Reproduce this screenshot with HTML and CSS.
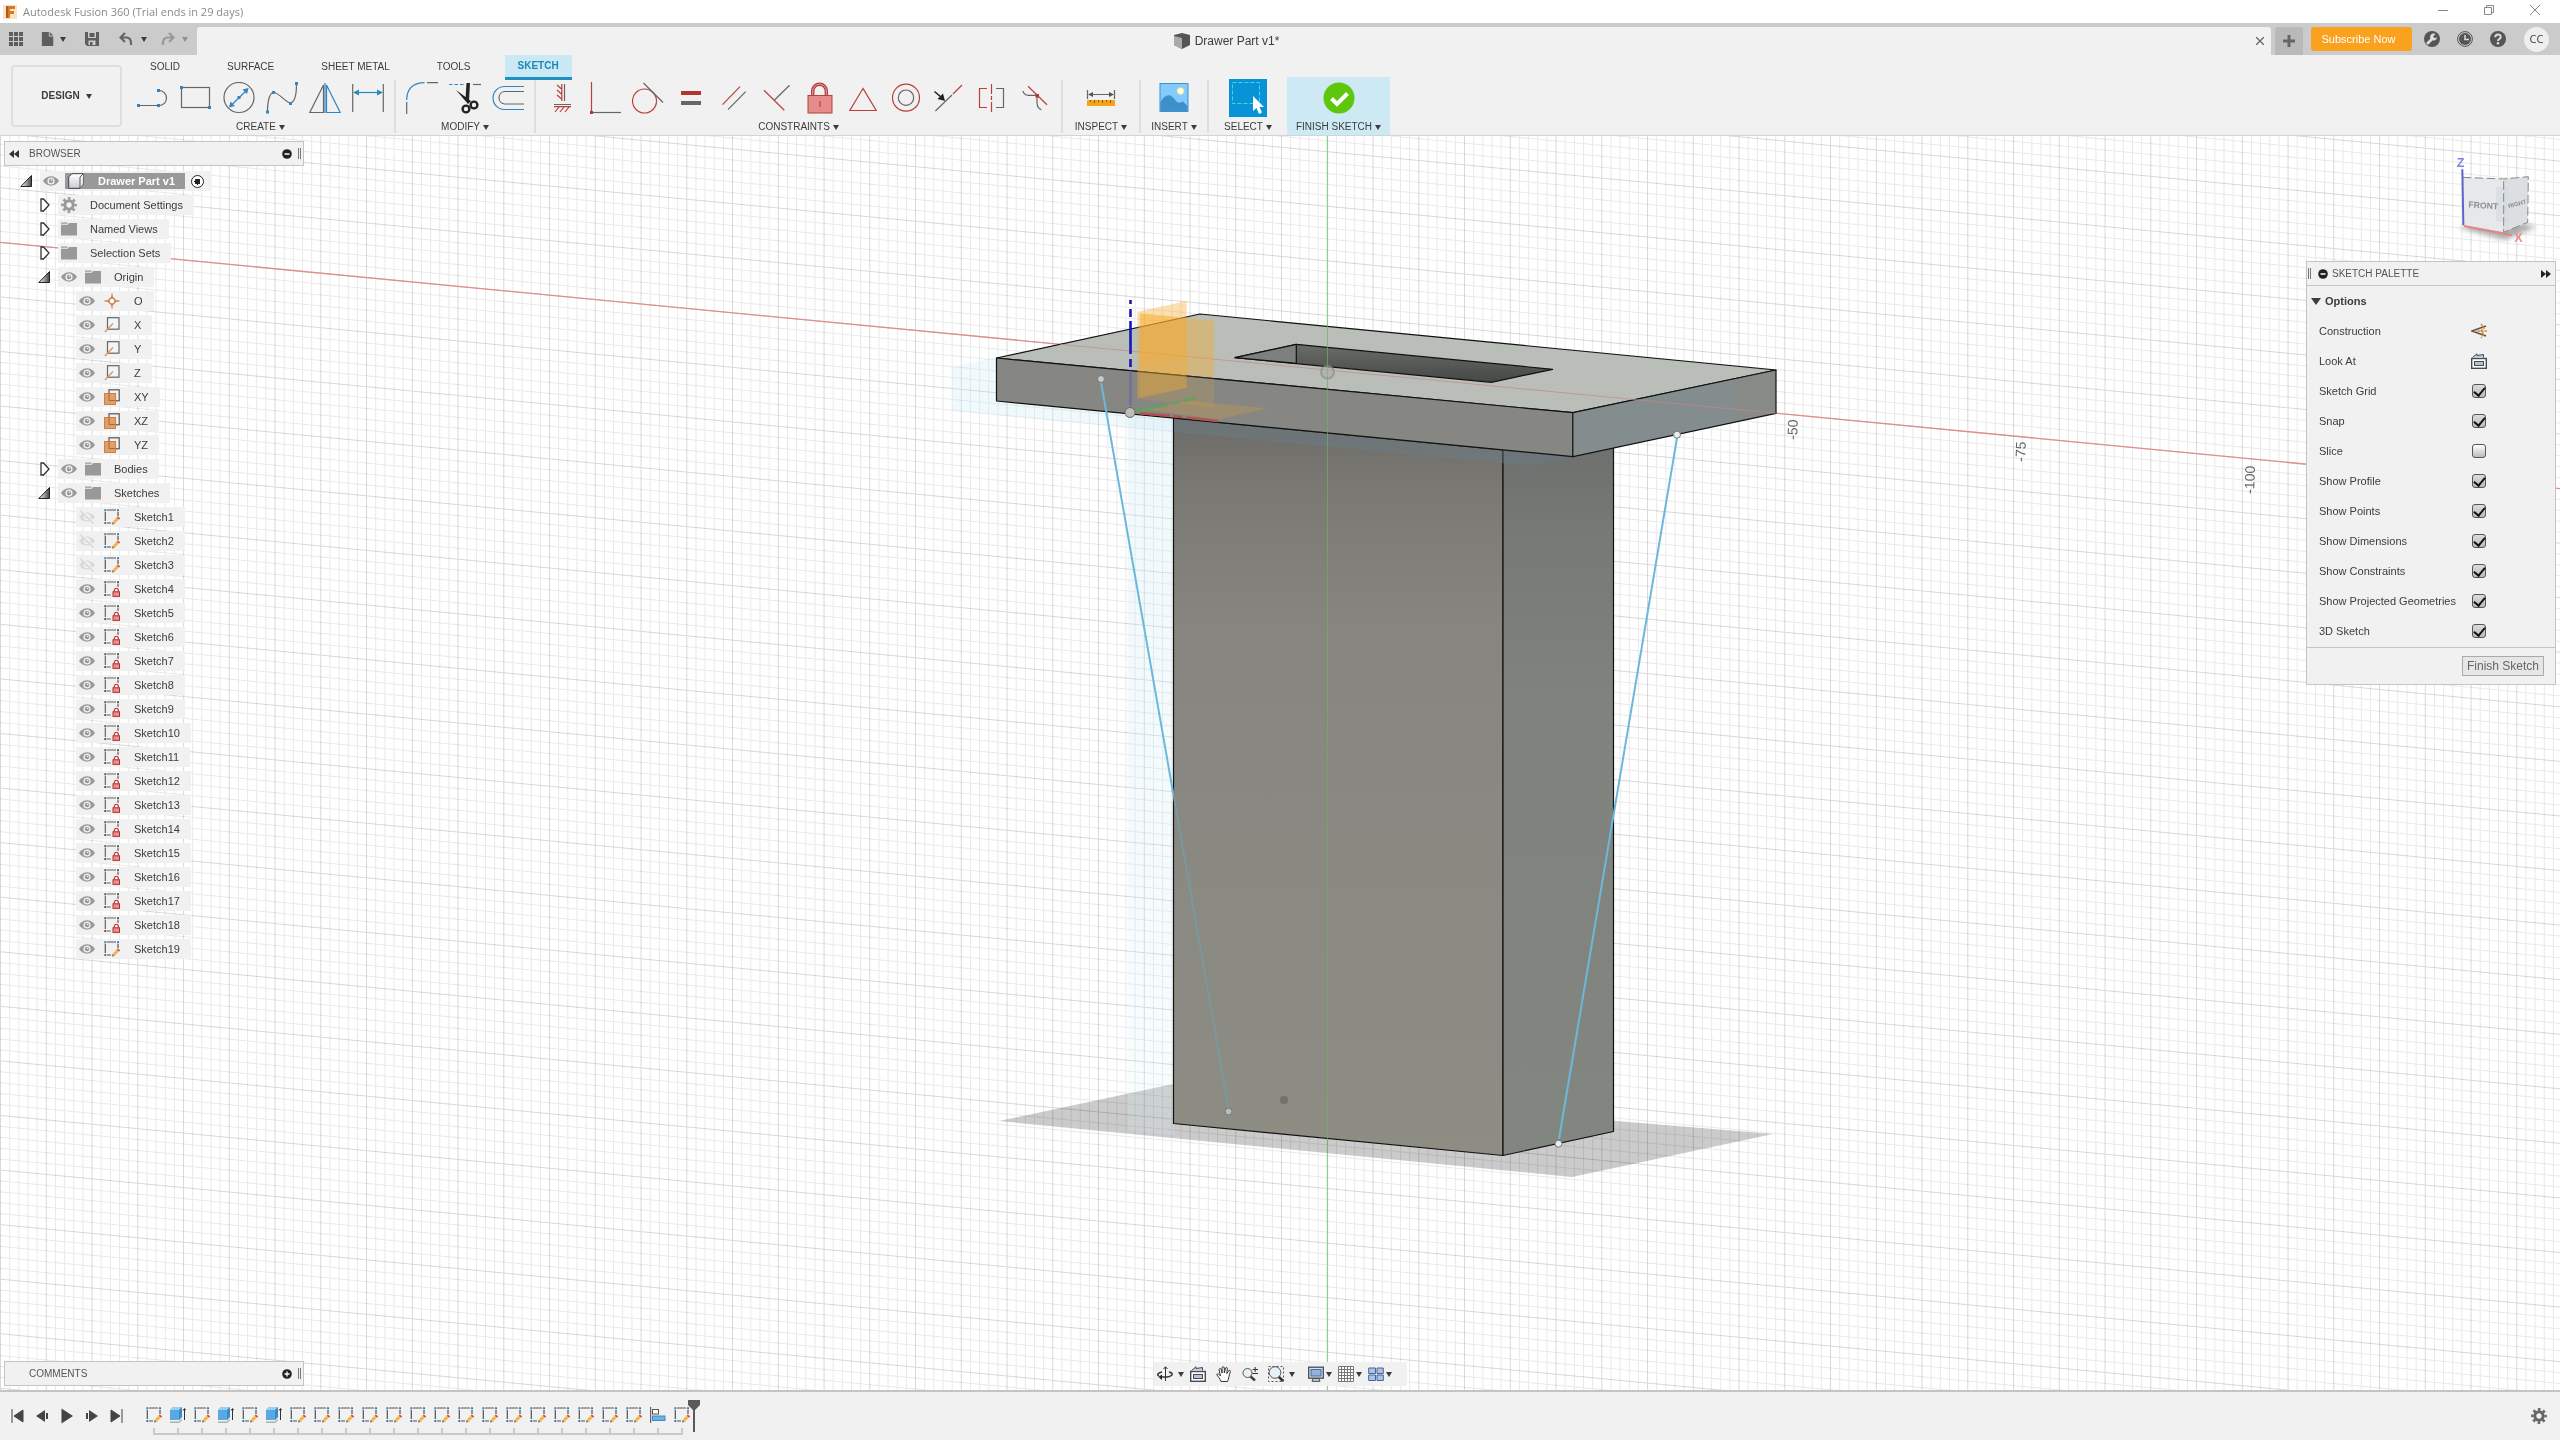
FILE: index.html
```html
<!DOCTYPE html>
<html lang="en">
<head>
<meta charset="utf-8">
<title>Autodesk Fusion 360</title>
<link rel="stylesheet" href="styles.css">
</head>
<body>
<svg class="sprite" aria-hidden="true">
  <defs>
    <linearGradient id="tri-fill" x1="0" x2="1"><stop offset="0" stop-color="#fff"/><stop offset="1" stop-color="#444"/></linearGradient>
    <linearGradient id="cube-fill" x1="0" x2="0" y1="0" y2="1"><stop offset="0" stop-color="#fff"/><stop offset="1" stop-color="#c9ccd2"/></linearGradient>
  </defs>
  <symbol id="eye" viewBox="0 0 16 16"><path d="M0 8C4 1.800 12 1.800 16 8C12 14.200 4 14.200 0 8Z" fill="#999"/><circle cx="8" cy="8" r="3.600" fill="#f1f1f1"/><circle cx="8" cy="8" r="2.200" fill="#999"/><circle cx="8.500" cy="7.300" r=".8" fill="#f1f1f1"/></symbol>
  <symbol id="eye-off" viewBox="0 0 16 16"><path d="M0 8C4 2 12 2 16 8C12 14 4 14 0 8Z" fill="#dadada"/><circle cx="8" cy="8" r="3.300" fill="#f1f1f1"/><circle cx="8" cy="8" r="1.800" fill="#dadada"/><path d="M2 1.500L15 14" stroke="#f1f1f1" stroke-width="3"/><path d="M1.500 2L14.500 14.500" stroke="#d4d4d4" stroke-width="1.300"/></symbol>
  <symbol id="folder" viewBox="0 0 16 16"><path d="M0 1.500h6.500v1.300H0zM0 3.700h7l1-1.700h8v12.500H0z" fill="#999"/></symbol>
  <symbol id="gear" viewBox="0 0 16 16"><circle cx="8" cy="8" r="4.200" fill="none" stroke="currentColor" stroke-width="3"/><circle cx="8" cy="8" r="6.600" fill="none" stroke="currentColor" stroke-width="2.600" stroke-dasharray="2.600 2.584" stroke-dashoffset="1.300"/></symbol>
  <symbol id="open" viewBox="0 0 12 12"><path d="M11.500 .5V11.500H.8Z" fill="url(#tri-fill)" stroke="#222"/></symbol>
  <symbol id="closed" viewBox="0 0 10 14"><path d="M1 1V13H3.500L9 7L3.500 1Z" fill="#fff" stroke="#333" stroke-width="1.300"/></symbol>
  <symbol id="cube" viewBox="0 0 16 16"><path d="M.7 4L4 .7H15.300V11L12 15.300H.7Z" fill="url(#cube-fill)" stroke="#444"/><path d="M.7 4H12V15.300L15.300 11V.7Z" fill="#fff" fill-opacity=".5"/><path d="M12 4L15.300 .7M12 4V15.300" fill="none" stroke="#555"/></symbol>
  <symbol id="point" viewBox="0 0 16 16"><path d="M8 .5V15.500M.5 8H15.500" stroke="#d18a56" stroke-width="1.300"/><path d="M8 2.800L13.200 8L8 13.200L2.800 8Z" fill="#d18a56"/><circle cx="8" cy="8" r="2.200" fill="#fff"/></symbol>
  <symbol id="axis" viewBox="0 0 16 16"><rect x="3.500" y=".7" width="11.500" height="11.500" fill="#f4f4f4" stroke="#666" stroke-width="1.200"/><path d="M.8 15L9 6.500" stroke="#dc9258" stroke-width="1.200"/></symbol>
  <symbol id="plane" viewBox="0 0 16 16"><rect x="5" y=".8" width="10.200" height="11" fill="none" stroke="#555" stroke-width="1.200"/><rect x=".5" y="4.500" width="11" height="11" fill="#e0a06c" stroke="#d08040"/><path d="M5 4.500V11.500H11.500" fill="none" stroke="#b8672b"/></symbol>
  <symbol id="sk" viewBox="0 0 16 16"><path d="M3 1H12M1.300 3V12M14 3V7M3 14H7" stroke="#555" stroke-width="1.200" fill="none"/><path d="M.3 .3h2v2h-2zM13 .3h2v2h-2zM.3 13h2v2h-2z" fill="#2c7fbb"/><path d="M9 14.500L14.300 9" stroke="#efb75a" stroke-width="3.200"/><path d="M13.300 8L15.500 10" stroke="#d5463e" stroke-width="1.600"/><path d="M8 15.600L8.600 13.200L10.300 15Z" fill="#666"/></symbol>
  <symbol id="skl" viewBox="0 0 16 16"><path d="M3 1H12M1.300 3V12M14 3V6M3 14H7" stroke="#666" stroke-width="1.200" fill="none"/><path d="M.3 .3h2v2h-2zM13 .3h2v2h-2zM.3 13h2v2h-2z" fill="#555"/><path d="M10.300 11V9.300a2 2 0 0 1 4 0V11" fill="none" stroke="#c43c3c" stroke-width="1.200"/><rect x="9" y="10.800" width="6.500" height="4.600" fill="#ea8d8d" stroke="#b52f2f"/></symbol>
  <symbol id="ext" viewBox="0 0 16 16"><path d="M0 14.500H8.500L12 12V13.500L9 16H0Z" fill="#a9b3b9"/><path d="M0 3L3 0H12V10L9 13H0Z" fill="#5aa9e2"/><path d="M0 3L3 0H12L9 3Z" fill="#9bd0f4"/><path d="M9 3L12 0V10L9 13Z" fill="#3c8ac6"/><path d="M14.500 2V13M13 3.500L14.500 1.500L16 3.500" stroke="#333" fill="none"/></symbol>
  <symbol id="align" viewBox="0 0 16 16"><path d="M.7 0V16" stroke="#444"/><rect x="2.500" y="2.500" width="6" height="4.500" fill="#fff" stroke="#555"/><rect x="2.500" y="9" width="12.500" height="4.500" fill="#6fb1e2" stroke="#3f8ac2"/></symbol>
  <symbol id="look" viewBox="0 0 16 16"><rect x=".7" y="5.500" width="14.600" height="9.800" fill="#fff" stroke="#444b57" stroke-width="1.400"/><rect x="3.500" y="8.500" width="9" height="4" fill="#b9c1cf" stroke="#444b57"/><path d="M1.500 4.500L6 .8V2.500L12.500 1.500V4.500" fill="#c3c9d3" stroke="#444b57"/></symbol>
</svg>

<header class="titlebar">
  <svg class="i14" viewBox="0 0 14 14"><rect width="14" height="14" fill="#fbe3c8"/><path d="M3 13V1H12V4H7V6H11V9H7V13Z" fill="#d77b22"/><path d="M3 13V1H5V13Z" fill="#b5581c"/></svg>
  <h1 class="apptitle">Autodesk Fusion 360 (Trial ends in 29 days)</h1>
  <div class="winbtns">
    <button aria-label="Minimize"><svg class="i10" viewBox="0 0 10 10"><path d="M0 5.500H10" stroke="#888"/></svg></button>
    <button aria-label="Restore"><svg class="i10" viewBox="0 0 10 10"><path d="M.5 2.500h7v7h-7zM2.500 2.500v-2h7v7h-2" fill="none" stroke="#888"/></svg></button>
    <button aria-label="Close"><svg class="i10" viewBox="0 0 10 10"><path d="M0 0L10 10M10 0L0 10" stroke="#888"/></svg></button>
  </div>
</header>

<div class="appbar">
  <div class="quick">
    <button aria-label="Data panel"><svg class="i14" viewBox="0 0 14 14"><path d="M0 0h4v4H0zM5 0h4v4H5zM10 0h4v4h-4zM0 5h4v4H0zM5 5h4v4H5zM10 5h4v4h-4zM0 10h4v4H0zM5 10h4v4H5zM10 10h4v4h-4z" fill="#5e5e5e"/></svg></button>
    <button class="pair file" aria-label="File"><svg class="i14" viewBox="0 0 14 16"><path d="M0 0H8V5H13V16H0Z" fill="#5e5e5e"/><path d="M9 0L13 4H9Z" fill="#5e5e5e"/></svg><span class="caret"></span></button>
    <button class="save" aria-label="Save"><svg class="i14" viewBox="0 0 14 14"><path d="M0 0H14V14H2L0 12Z" fill="#5e5e5e"/><path d="M3 0H11V6H3ZM3.500 8.500H10.500V13H3.500Z" fill="#ccc"/><path d="M4.500 1H9.500V5H4.500ZM5 10H7.500V13H5Z" fill="#5e5e5e"/></svg></button>
    <button class="pair undo" aria-label="Undo"><svg class="i14" viewBox="0 0 14 14"><path d="M6 1L1.500 5.500L6 10M2 5.500H8Q12.500 6 12 13" fill="none" stroke="#666" stroke-width="2.200"/></svg><span class="caret"></span></button>
    <button class="pair redo" aria-label="Redo"><svg class="i14" viewBox="0 0 14 14"><path d="M8 1L12.500 5.500L8 10M12 5.500H6Q1.500 6 2 13" fill="none" stroke="#999" stroke-width="2.200"/></svg><span class="caret pale"></span></button>
  </div>
  <div class="doctab">
    <span></span>
    <span class="docname"><svg class="i16" viewBox="0 0 16 16"><path d="M0 2L8 0L16 2V12L8 16L0 12Z" fill="#555"/><path d="M0 3L8 5V16L0 12Z" fill="#aaa"/></svg>Drawer Part v1*</span>
    <button class="closetab" aria-label="Close tab"><svg class="i8" viewBox="0 0 8 8"><path d="M0 0L8 8M8 0L0 8" stroke="#666" stroke-width="1.300"/></svg></button>
  </div>
  <button class="newtab" aria-label="New tab"><svg class="i14" viewBox="0 0 14 14"><path d="M7 1V13M1 7H13" stroke="#666" stroke-width="3"/></svg></button>
  <button class="subscribe">Subscribe Now</button>
  <div class="account">
    <button aria-label="Extensions"><svg class="i16" viewBox="0 0 16 16"><circle cx="8" cy="8" r="8" fill="#555"/><path d="M3 13L8.500 7.500" stroke="#ddd" stroke-width="2.600"/><path d="M11.500 3A3.500 3.500 0 1 0 13 6.500L10.500 7L9 5.500Z" fill="#ddd"/></svg></button>
    <button aria-label="Job status"><svg class="i16" viewBox="0 0 16 16"><circle cx="8" cy="8" r="7.400" fill="none" stroke="#555"/><circle cx="8" cy="8" r="6" fill="#555"/><path d="M8 4V8.500H12" stroke="#ddd" stroke-width="1.500" fill="none"/></svg></button>
    <button aria-label="Help"><svg class="i16" viewBox="0 0 16 16"><circle cx="8" cy="8" r="8" fill="#555"/><path d="M5.300 6.300C5.300 2.500 10.700 2.500 10.700 6C10.700 8 8 8 8 10" fill="none" stroke="#ddd" stroke-width="2"/><circle cx="8" cy="12.300" r="1.300" fill="#ddd"/></svg></button>
    <button class="avatar">CC</button>
  </div>
</div>

<div class="ribbon">
  <button class="design">DESIGN<span class="caret"></span></button>
  <div class="ribbonmain">
    <nav class="tabs">
      <button>SOLID</button><button>SURFACE</button><button>SHEET METAL</button><button>TOOLS</button><button class="active">SKETCH</button>
    </nav>
    <div class="panels">
      <section class="panel">
        <div class="tools">
          <button aria-label="Line"><svg class="i32" viewBox="0 0 32 32"><path d="M2 23.500H21M22 8.500a7.500 7.500 0 0 1 0 15" class="g"/><path d="M0 22h3v3H0zM20 22h3v3h-3zM20 7h3v3h-3z" class="bf"/></svg></button>
          <button aria-label="Rectangle"><svg class="i32" viewBox="0 0 32 32"><rect x="1.500" y="5.500" width="28" height="20" class="g"/><path d="M0 4h3v3H0zM28 24h3v3h-3z" class="bf"/></svg></button>
          <button aria-label="Circle"><svg class="i32" viewBox="0 0 32 32"><circle cx="16" cy="15.500" r="15" class="g"/><path d="M8 23.500L24 8" class="b"/><path d="M14.500 14h3v3h-3zM6 25.500l1.500-6 4.500 4.500zM25.500 6l-1.500 6-4.500-4.500z" class="bf"/></svg></button>
          <button aria-label="Spline"><svg class="i32" viewBox="0 0 32 32"><path d="M1.500 30C1.500 18 4 10.500 7.500 10.500C13 10.500 20 21 24.500 21C29 20 30.500 12 30.500 2" class="g"/><path d="M0 28.500h3v3H0zM6 9h3v3H6zM23 20h3v3h-3zM29 0h3v3h-3z" class="bf"/></svg></button>
          <button aria-label="Mirror"><svg class="i32" viewBox="0 0 32 32"><path d="M14.500 3V30.500H.8Z" class="g"/><path d="M17.500 3V30.500H31.200Z" class="b"/><path d="M16 1V31" class="b"/></svg></button>
          <button aria-label="Dimension"><svg class="i32" viewBox="0 0 32 32"><path d="M.7 2V30M31.300 2V30" class="g"/><path d="M3 10.500H29" class="b"/><path d="M1 10.500l6-3v6zM31 10.500l-6-3v6z" class="bf"/></svg></button>
        </div>
        <button class="plabel">CREATE<span class="caret"></span></button>
      </section>
      <section class="panel">
        <div class="tools">
          <button aria-label="Fillet"><svg class="i32" viewBox="0 0 32 32"><path d="M.7 20V32M21 .7H32" class="g"/><path d="M.7 18Q1 1 18.500 .7" class="b"/></svg></button>
          <button aria-label="Trim"><svg class="i32" viewBox="0 0 32 32"><path d="M0 2.500H16" class="b" stroke-dasharray="3.500 2"/><path d="M24 2.500H32" class="g"/><path d="M17.500 1H21L20 19L16.500 17ZM7 8L22 19L19 22Z" fill="#222"/><circle cx="17" cy="27" r="3.400" fill="none" stroke="#222" stroke-width="2.400"/><circle cx="25" cy="23" r="3.400" fill="none" stroke="#222" stroke-width="2.400"/></svg></button>
          <button aria-label="Offset"><svg class="i32" viewBox="0 0 32 32"><path d="M32 4.500H12.500a11.500 11.500 0 0 0 0 23H32" class="b"/><path d="M32 9.500H12.500a6.300 6.300 0 0 0 0 12.500H32" class="g"/></svg></button>
        </div>
        <button class="plabel">MODIFY<span class="caret"></span></button>
      </section>
      <section class="panel">
        <div class="tools">
          <button aria-label="Horizontal/Vertical"><svg class="i32" viewBox="0 0 32 32"><path d="M18.500 2V19M8 22.500H25" class="g"/><path d="M15.800 2V19M8 24.700H25M11 3l4.500 4M11 8l4.500 4M11 13l4.500 4M9 30l4-5M14 30l4-5M19 30l4-5" class="r"/></svg></button>
          <button aria-label="Coincident"><svg class="i32" viewBox="0 0 32 32"><path d="M4 30.500H32" class="g"/><path d="M2.500 0V29" class="r"/><path d="M1 29h3v3H1z" class="rf"/></svg></button>
          <button aria-label="Tangent"><svg class="i32" viewBox="0 0 32 32"><circle cx="12.500" cy="19" r="12" class="r"/><path d="M11.500 1L31 20.500" class="g"/></svg></button>
          <button aria-label="Equal"><svg class="i32" viewBox="0 0 32 32"><path d="M6 9H26V13H6Z" class="rf"/><path d="M6 19H26V23H6Z" fill="#666"/></svg></button>
          <button aria-label="Parallel"><svg class="i32" viewBox="0 0 32 32"><path d="M4.500 22.700L22 4.700" class="r"/><path d="M10 27.700L27.700 9.700" class="g"/></svg></button>
          <button aria-label="Perpendicular"><svg class="i32" viewBox="0 0 32 32"><path d="M3 8.300L23.300 28.300" class="r"/><path d="M13.500 18L28.600 3.300" class="g"/></svg></button>
          <button aria-label="Fix"><svg class="i32" viewBox="0 0 32 32"><path d="M8.700 14V9a6.500 6.500 0 0 1 13.600 0V14" fill="none" stroke="#b5403c" stroke-width="3.400"/><path d="M8.700 14V9a6.500 6.500 0 0 1 13.600 0V14" fill="none" stroke="#ec9a98"/><rect x="4" y="13.500" width="24" height="17.500" fill="#e58b8a" stroke="#b5403c"/><path d="M16 19V25" class="r"/></svg></button>
          <button aria-label="Midpoint"><svg class="i32" viewBox="0 0 32 32"><path d="M16 6.500L2.800 28.500H29.200Z" class="r"/></svg></button>
          <button aria-label="Concentric"><svg class="i32" viewBox="0 0 32 32"><circle cx="16" cy="15.700" r="13.500" class="r"/><circle cx="16" cy="15.700" r="7.700" class="g"/></svg></button>
          <button aria-label="Collinear"><svg class="i32" viewBox="0 0 32 32"><path d="M2.400 29L19 13" class="g"/><path d="M20 12L29 3" class="r"/><path d="M1.500 9.500L8 15" stroke="#222" stroke-width="1.600"/><path d="M12 19L4.500 17L10 11.500Z" fill="#222"/></svg></button>
          <button aria-label="Symmetry"><svg class="i32" viewBox="0 0 32 32"><path d="M11 6.500H3.500V25.500H11M15.500 2V12M15.500 14V18M15.500 20V30" class="r"/><path d="M20 6.500H27.500V25.500H20" class="g"/></svg></button>
          <button aria-label="Curvature"><svg class="i32" viewBox="0 0 32 32"><path d="M4 9C5 15 12 13 18 13.500C18 20 17 26 22.400 27.700" class="g"/><path d="M9 4.300L28 22.700" class="r"/><path d="M16.500 12h3.500v3.500h-3.500z" class="rf"/></svg></button>
        </div>
        <button class="plabel">CONSTRAINTS<span class="caret"></span></button>
      </section>
      <section class="panel mid">
        <div class="tools"><button aria-label="Measure"><svg class="i32" viewBox="0 0 32 32"><path d="M2.500 8V17M29.500 8V17M4 12.500H28" class="g"/><path d="M3 12.500l5-2.500v5zM29 12.500l-5-2.500v5z" fill="#555"/><path d="M2 18H30V24H2Z" fill="#f5a31a"/><path d="M5.500 18V20M9.500 18V21M13.500 18V20M17.500 18V21M21.500 18V20M25.500 18V21" stroke="#8a5a10"/></svg></button></div>
        <button class="plabel">INSPECT<span class="caret"></span></button>
      </section>
      <section class="panel narrow">
        <div class="tools"><button aria-label="Insert image"><svg class="i32" viewBox="0 0 32 32"><rect x="2" y="1.500" width="28" height="28" fill="#84caff" stroke="#4193c8"/><path d="M2.500 20Q10 7 18 19Q20 22 25 19.500L29.500 24V29H2.500Z" fill="#3d90c9"/><circle cx="22.500" cy="9" r="3.600" fill="#fffce8" stroke="#c9e58b"/></svg></button></div>
        <button class="plabel">INSERT<span class="caret"></span></button>
      </section>
      <section class="panel last">
        <div class="tools"><button class="select" aria-label="Select"><svg class="i38" viewBox="0 0 38 38"><rect width="38" height="38" fill="#0893d6"/><rect x="3.500" y="3.500" width="27" height="21" fill="none" stroke="#4bd3e4" stroke-dasharray="4 2"/><path d="M24 17V32L27.500 29L30 35L33 33.500L30.500 28H35Z" fill="#fff"/></svg></button></div>
        <button class="plabel">SELECT<span class="caret"></span></button>
      </section>
      <section class="panel finish">
        <div class="tools"><button aria-label="Finish"><svg class="i32" viewBox="0 0 32 32"><circle cx="16" cy="16" r="15.500" fill="#5fc70b"/><path d="M8.500 16.500L14 22L24.500 11.500" fill="none" stroke="#fff" stroke-width="4"/></svg></button></div>
        <button class="plabel">FINISH SKETCH<span class="caret"></span></button>
      </section>
    </div>
  </div>
</div>

<main class="viewport">
  <svg class="scene" viewBox="0 136 2560 1254" preserveAspectRatio="xMidYMid slice">
    <defs>
      <linearGradient id="front" x1="0" x2="0" y1="0" y2="1"><stop offset="0" stop-color="#6c6b67"/><stop offset=".1" stop-color="#7b7974"/><stop offset=".28" stop-color="#868580"/><stop offset="1" stop-color="#8e8d84"/></linearGradient>
      <linearGradient id="side" x1="0" x2="0" y1="0" y2="1"><stop offset="0" stop-color="#6d706e"/><stop offset=".12" stop-color="#777975"/><stop offset=".35" stop-color="#80827d"/><stop offset="1" stop-color="#828680"/></linearGradient>
      <linearGradient id="slot" x1="0" x2="0" y1="0" y2="1"><stop offset="0" stop-color="#6b6d69"/><stop offset="1" stop-color="#454744"/></linearGradient>
      <linearGradient id="strip" x1="0" x2="0" y1="0" y2="1"><stop offset="0" stop-color="#c9e9f5" stop-opacity=".3"/><stop offset="1" stop-color="#d5f0f8" stop-opacity=".16"/></linearGradient>
    </defs>
    <path d="M999 1121L1173 1084L1773 1134L1572 1177Z" fill="#cbcbcb"/>
    <path id="grid-minor" class="minor"/>
    <path id="grid-major" class="major"/>
    <path d="M0 242.300L2560 488.600" stroke="#dc8f8c" stroke-width="1.300"/>
    <path d="M1327.500 136V1390" stroke="#8ad28c" stroke-width="1.200"/>
    <path d="M952 367L997 357V414L952 411ZM997 401L1174 419V432L997 415Z" fill="#c5e7f4" fill-opacity=".25"/>
    <path d="M1128 415L1174 419V1135L1128 1130Z" fill="url(#strip)"/>
    <g stroke="#111" stroke-width="1.200" stroke-linejoin="round">
      <path d="M1173.500 418V1123.500L1503 1155.500V450Z" fill="url(#front)"/>
      <path d="M1503 449V1155.500L1613.500 1131.500V447Z" fill="url(#side)"/>
      <path d="M1174 418.500V432L1531 466L1573 457Z" fill="#6a7f8c" fill-opacity=".4" stroke="none"/>
      <path d="M996.500 358L1200 314L1776 370L1573 412.700Z" fill="#b9bfb8"/>
      <path d="M996.500 358V401L1573 456.700V412.700Z" fill="#868682"/>
      <path d="M1573 412.700V456.700L1776 413.300V370Z" fill="#868b88"/>
      <path d="M1573 413.300V456L1734 421.500V379.500Z" fill="#7d929a" fill-opacity=".3" stroke="none"/>
      <path d="M1235 357.700L1296.300 344.300L1552.700 369.300L1491.300 382.300Z" fill="url(#slot)"/>
      <path d="M1235 357.700L1296.300 344.300V363.300Z" fill="#7c817e"/>
    </g>
    <path d="M1060 344.300L1776 413.200" stroke="#c58882" opacity=".7"/>
    <path d="M1327.500 326V1153" stroke="#6fae6c" opacity=".7"/>
    <g fill="#f8ab2b">
      <path d="M1137.300 311.700L1186.700 301V388L1137.300 398.500Z" fill-opacity=".38"/>
      <path d="M1140 313.300L1214 320.700V377L1140 370Z" fill-opacity=".4"/>
      <path d="M1140 370L1214 377V408L1140 399Z" fill-opacity=".14"/>
      <path d="M1140 313.300L1186.700 318V357L1140 367Z" fill-opacity=".2"/>
      <path d="M1140 409L1190 401L1268 408.300L1219 419.500Z" fill-opacity=".2"/>
    </g>
    <path d="M1130.500 300V304M1130.500 309V317M1130.500 321V354M1130.500 359V367" stroke="#1a17b5" stroke-width="2.600"/>
    <path d="M1130.500 371V406" stroke="#716fa0" stroke-width="2.400"/>
    <path d="M1135 411L1167 405M1172 403.500L1179 402M1183 400.500L1194 398.500" stroke="#5fa45b" stroke-width="2.600"/>
    <path d="M1140 413.300L1170 415.700M1173 416.300L1182 417M1186 417.500L1218 421" stroke="#b5524e" stroke-width="2.400"/>
    <circle cx="1130" cy="412.500" r="5" fill="#bdbdbb" stroke="#666"/>
    <circle cx="1327.500" cy="372" r="6.500" fill="#a9aaa5" fill-opacity=".5" stroke="#838580" stroke-width="2" stroke-opacity=".6"/>
    <path d="M1101 382L1173.500 795M1677 438L1559 1139" stroke="#6cb8da" stroke-width="2"/>
    <path d="M1173.500 795L1228.500 1108" stroke="#7899a4" stroke-width="1.800"/>
    <g fill="#e9eeee" stroke="#777"><circle cx="1101" cy="379" r="3.500" fill="#c6cccc"/><circle cx="1228.500" cy="1111.500" r="3.500" fill="#b9bdbb"/><circle cx="1677" cy="434.700" r="3.500"/><circle cx="1558.500" cy="1143.700" r="3.500"/></g>
    <circle cx="1284" cy="1100" r="4" fill="#71716d" stroke="#777772" stroke-width="1"/>
    <g class="axis"><text transform="translate(1797 440) rotate(-88)">-50</text><text transform="translate(2025 462) rotate(-88)">-75</text><text transform="translate(2254 494) rotate(-88)">-100</text></g>
  </svg>

  <aside class="left">
    <section class="browser">
      <header class="bar"><svg class="i10" viewBox="0 0 10 10"><path d="M5 1V9L0 5ZM10 1V9L5 5Z" fill="#333"/></svg><h2>BROWSER</h2><button aria-label="Collapse"><svg class="i10" viewBox="0 0 10 10"><circle cx="5" cy="5" r="4.800" fill="#222"/><path d="M2.500 5H7.500" stroke="#fff" stroke-width="1.500"/></svg></button><i class="grip"></i></header>
      <ul class="tree">
        <li class="l0"><svg class="tw"><use href="#open"/></svg><div class="row"><svg class="i16"><use href="#eye"/></svg><span class="root"><svg class="i16"><use href="#cube"/></svg>Drawer Part v1</span><input type="radio" checked aria-label="Activate component"></div></li>
        <li class="l1"><svg class="tc"><use href="#closed"/></svg><div class="row"><svg class="i16 grey"><use href="#gear"/></svg>Document Settings</div></li>
        <li class="l1"><svg class="tc"><use href="#closed"/></svg><div class="row"><svg class="i16"><use href="#folder"/></svg>Named Views</div></li>
        <li class="l1"><svg class="tc"><use href="#closed"/></svg><div class="row"><svg class="i16"><use href="#folder"/></svg>Selection Sets</div></li>
        <li class="l1"><svg class="tw"><use href="#open"/></svg><div class="row"><svg class="i16 eye"><use href="#eye"/></svg><svg class="i16"><use href="#folder"/></svg>Origin</div></li>
        <li class="l2"><div class="row"><svg class="i16 eye"><use href="#eye"/></svg><svg class="i16"><use href="#point"/></svg>O</div></li>
        <li class="l2"><div class="row"><svg class="i16 eye"><use href="#eye"/></svg><svg class="i16"><use href="#axis"/></svg>X</div></li>
        <li class="l2"><div class="row"><svg class="i16 eye"><use href="#eye"/></svg><svg class="i16"><use href="#axis"/></svg>Y</div></li>
        <li class="l2"><div class="row"><svg class="i16 eye"><use href="#eye"/></svg><svg class="i16"><use href="#axis"/></svg>Z</div></li>
        <li class="l2"><div class="row"><svg class="i16 eye"><use href="#eye"/></svg><svg class="i16"><use href="#plane"/></svg>XY</div></li>
        <li class="l2"><div class="row"><svg class="i16 eye"><use href="#eye"/></svg><svg class="i16"><use href="#plane"/></svg>XZ</div></li>
        <li class="l2"><div class="row"><svg class="i16 eye"><use href="#eye"/></svg><svg class="i16"><use href="#plane"/></svg>YZ</div></li>
        <li class="l1"><svg class="tc"><use href="#closed"/></svg><div class="row"><svg class="i16 eye"><use href="#eye"/></svg><svg class="i16"><use href="#folder"/></svg>Bodies</div></li>
        <li class="l1"><svg class="tw"><use href="#open"/></svg><div class="row"><svg class="i16 eye"><use href="#eye"/></svg><svg class="i16"><use href="#folder"/></svg>Sketches</div></li>
        <li class="l2"><div class="row"><svg class="i16 eye"><use href="#eye-off"/></svg><svg class="i16"><use href="#sk"/></svg>Sketch1</div></li>
        <li class="l2"><div class="row"><svg class="i16 eye"><use href="#eye-off"/></svg><svg class="i16"><use href="#sk"/></svg>Sketch2</div></li>
        <li class="l2"><div class="row"><svg class="i16 eye"><use href="#eye-off"/></svg><svg class="i16"><use href="#sk"/></svg>Sketch3</div></li>
        <li class="l2"><div class="row"><svg class="i16 eye"><use href="#eye"/></svg><svg class="i16"><use href="#skl"/></svg>Sketch4</div></li>
        <li class="l2"><div class="row"><svg class="i16 eye"><use href="#eye"/></svg><svg class="i16"><use href="#skl"/></svg>Sketch5</div></li>
        <li class="l2"><div class="row"><svg class="i16 eye"><use href="#eye"/></svg><svg class="i16"><use href="#skl"/></svg>Sketch6</div></li>
        <li class="l2"><div class="row"><svg class="i16 eye"><use href="#eye"/></svg><svg class="i16"><use href="#skl"/></svg>Sketch7</div></li>
        <li class="l2"><div class="row"><svg class="i16 eye"><use href="#eye"/></svg><svg class="i16"><use href="#skl"/></svg>Sketch8</div></li>
        <li class="l2"><div class="row"><svg class="i16 eye"><use href="#eye"/></svg><svg class="i16"><use href="#skl"/></svg>Sketch9</div></li>
        <li class="l2"><div class="row"><svg class="i16 eye"><use href="#eye"/></svg><svg class="i16"><use href="#skl"/></svg>Sketch10</div></li>
        <li class="l2"><div class="row"><svg class="i16 eye"><use href="#eye"/></svg><svg class="i16"><use href="#skl"/></svg>Sketch11</div></li>
        <li class="l2"><div class="row"><svg class="i16 eye"><use href="#eye"/></svg><svg class="i16"><use href="#skl"/></svg>Sketch12</div></li>
        <li class="l2"><div class="row"><svg class="i16 eye"><use href="#eye"/></svg><svg class="i16"><use href="#skl"/></svg>Sketch13</div></li>
        <li class="l2"><div class="row"><svg class="i16 eye"><use href="#eye"/></svg><svg class="i16"><use href="#skl"/></svg>Sketch14</div></li>
        <li class="l2"><div class="row"><svg class="i16 eye"><use href="#eye"/></svg><svg class="i16"><use href="#skl"/></svg>Sketch15</div></li>
        <li class="l2"><div class="row"><svg class="i16 eye"><use href="#eye"/></svg><svg class="i16"><use href="#skl"/></svg>Sketch16</div></li>
        <li class="l2"><div class="row"><svg class="i16 eye"><use href="#eye"/></svg><svg class="i16"><use href="#skl"/></svg>Sketch17</div></li>
        <li class="l2"><div class="row"><svg class="i16 eye"><use href="#eye"/></svg><svg class="i16"><use href="#skl"/></svg>Sketch18</div></li>
        <li class="l2"><div class="row"><svg class="i16 eye"><use href="#eye"/></svg><svg class="i16"><use href="#sk"/></svg>Sketch19</div></li>
      </ul>
    </section>
    <section class="bar comments"><h2>COMMENTS</h2><button aria-label="Expand comments"><svg class="i10" viewBox="0 0 10 10"><circle cx="5" cy="5" r="4.800" fill="#222"/><path d="M2.500 5H7.500M5 2.500V7.500" stroke="#fff" stroke-width="1.300"/></svg></button><i class="grip"></i></section>
  </aside>

  <div class="navbar">
    <button class="pair" aria-label="Orbit"><svg class="i16" viewBox="0 0 16 16"><path d="M8.500 1V15M6.500 3L8.500 .8L10.500 3" fill="none" stroke="#333"/><path d="M12 6C17 7 16 10 10 11H3M5 6C0 7 0 9 2 10" fill="none" stroke="#333" stroke-width="1.500"/><path d="M5 8.500V14L1.500 11Z" fill="#222"/></svg><span class="caret"></span></button>
    <button aria-label="Look at"><svg class="i16"><use href="#look"/></svg></button>
    <button class="pan" aria-label="Pan"><svg class="i16" viewBox="0 0 16 16"><path d="M5 15.500C4 12 1.500 10.500 .8 8.500C1.500 7 3.500 8.500 4.500 10L3 3.500C3.500 2 5 2.500 5.500 4L6 7L6 2C6.500 .3 8 .3 8.300 2V7L9.500 2C10.500 .8 11.500 1.500 11.300 3L10.800 7.500L12.800 4.500C14 4 14.800 4.800 14.200 6C13 9 13 12.500 11.500 15.500Z" fill="#fff" stroke="#333"/></svg></button>
    <button class="pan" aria-label="Zoom"><svg class="i16" viewBox="0 0 16 16"><path d="M8 10L13 14.500" stroke="#444" stroke-width="2.500"/><circle cx="5.500" cy="7" r="4.500" fill="#e6f2f7" stroke="#555"/><path d="M10.500 3.500H16M13.200 1V6M10.500 7.500H16" stroke="#333"/></svg></button>
    <button class="pair pan" aria-label="Zoom window"><svg class="i16" viewBox="0 0 16 16"><path d="M.5 .5H15.500V15.500H.5Z" fill="none" stroke="#555" stroke-dasharray="2 2"/><path d="M10 10L15 15" stroke="#333" stroke-width="2.500"/><circle cx="7" cy="6.500" r="5.800" fill="#e6f2f7" stroke="#555"/></svg><span class="caret"></span></button>
    <button class="pair wide" aria-label="Display settings"><svg class="i16" viewBox="0 0 16 16"><rect x=".7" y="1.200" width="14.600" height="11" fill="#dde3ec" stroke="#444b57" stroke-width="1.300"/><rect x="3" y="3.500" width="10" height="6.500" fill="#8fb4e2" stroke="#4b6a96"/><path d="M5 12.500H11L12 15.300H4Z" fill="#ccc" stroke="#444b57"/></svg><span class="caret"></span></button>
    <button class="pair tight" aria-label="Grid settings"><svg class="i16" viewBox="0 0 16 16"><path d="M.5 .5H15.500V15.500H.5ZM.5 3.500H15.500M.5 6.500H15.500M.5 9.500H15.500M.5 12.500H15.500M3.500 .5V15.500M6.500 .5V15.500M9.500 .5V15.500M12.500 .5V15.500" fill="#fff" stroke="#777"/></svg><span class="caret"></span></button>
    <button class="pair tight" aria-label="Viewports"><svg class="i16" viewBox="0 0 16 16"><path d="M.7 2H7.500V7.500H.7ZM9 2H15.300V7.500H9ZM.7 9H7.500V14.500H.7ZM9 9H15.300V14.500H9Z" fill="#a9c4ec" stroke="#4a6391"/></svg><span class="caret"></span></button>
  </div>

  <aside class="right">
    <svg class="viewcube" viewBox="558 423 330 360">
      <defs><filter id="soft"><feGaussianBlur stdDeviation="8"/></filter></defs>
      <path d="M595 683L735 720L830 680L740 660Z" fill="#999" filter="url(#soft)" opacity=".8"/>
      <path d="M608 532L731 537V697L610 676Z" fill="#e6e8ea"/><path d="M731 537L805 530L803 667L731 697Z" fill="#dcdee1"/>
      <path d="M708 560H744V665H708Z" fill="#d3dae4" opacity=".6"/>
      <path d="M608 532L731 537L805 530L803 667L731 697V537" fill="none" stroke="#888" stroke-width="3" stroke-dasharray="26 10"/>
      <path d="M607 508L610 676" stroke="#6462cb" stroke-width="6"/><path d="M612 678L755 706" stroke="#e88480" stroke-width="6"/>
      <text transform="translate(625 622) rotate(4)" class="face">FRONT</text><text transform="translate(746 624) rotate(-14)" class="face small">RIGHT</text>
      <text x="590" y="500" class="zlab">Z</text><text x="763" y="726" class="xlab">X</text>
    </svg>
    <section class="palette">
      <header class="phead"><i class="grip"></i><svg class="i10" viewBox="0 0 10 10"><circle cx="5" cy="5" r="4.800" fill="#222"/><path d="M2.500 5H7.500" stroke="#fff" stroke-width="1.500"/></svg><h2>SKETCH PALETTE</h2><svg class="i10 more" viewBox="0 0 10 10"><path d="M0 1V9L5 5ZM5 1V9L10 5Z" fill="#222"/></svg></header>
      <div class="options">
        <button class="optitle"><span class="caret big"></span>Options</button>
        <div class="opt"><span>Construction</span><button aria-label="Construction"><svg class="i16" viewBox="0 0 16 16"><path d="M15 3L1 8L15 13" fill="none" stroke="#555" stroke-width="1.500"/><path d="M3 8H16M10 1L13 5L10 8L13 11L10 15" fill="none" stroke="#e08a2c" stroke-width="1.500" stroke-dasharray="2.500 1"/></svg></button></div>
        <div class="opt"><span>Look At</span><button aria-label="Look At"><svg class="i16"><use href="#look"/></svg></button></div>
        <label class="opt"><span>Sketch Grid</span><input type="checkbox" checked></label>
        <label class="opt"><span>Snap</span><input type="checkbox" checked></label>
        <label class="opt"><span>Slice</span><input type="checkbox"></label>
        <label class="opt"><span>Show Profile</span><input type="checkbox" checked></label>
        <label class="opt"><span>Show Points</span><input type="checkbox" checked></label>
        <label class="opt"><span>Show Dimensions</span><input type="checkbox" checked></label>
        <label class="opt"><span>Show Constraints</span><input type="checkbox" checked></label>
        <label class="opt"><span>Show Projected Geometries</span><input type="checkbox" checked></label>
        <label class="opt"><span>3D Sketch</span><input type="checkbox" checked></label>
      </div>
      <footer class="pfoot"><button>Finish Sketch</button></footer>
    </section>
  </aside>
</main>

<footer class="timeline">
  <div class="play">
    <button aria-label="Go to start"><svg class="i16" viewBox="0 0 16 16"><path d="M3 1V15M14 2V14L5 8Z" fill="#444" stroke="#444"/></svg></button>
    <button aria-label="Step back"><svg class="i16" viewBox="0 0 16 16"><path d="M11 2V14L2 8Z" fill="#444"/><path d="M13 5V11" stroke="#444" stroke-width="2"/></svg></button>
    <button aria-label="Play"><svg class="i16" viewBox="0 0 16 16"><path d="M2.500 .5V15.500L14 8Z" fill="#444"/></svg></button>
    <button aria-label="Step forward"><svg class="i16" viewBox="0 0 16 16"><path d="M5 2V14L14 8Z" fill="#444"/><path d="M3 5V11" stroke="#444" stroke-width="2"/></svg></button>
    <button aria-label="Go to end"><svg class="i16" viewBox="0 0 16 16"><path d="M13 1V15M2 2V14L11 8Z" fill="#444" stroke="#444"/></svg></button>
  </div>
  <ol class="features">
    <li><svg class="i16"><use href="#sk"/></svg></li><li><svg class="i16"><use href="#ext"/></svg></li><li><svg class="i16"><use href="#sk"/></svg></li><li><svg class="i16"><use href="#ext"/></svg></li><li><svg class="i16"><use href="#sk"/></svg></li><li><svg class="i16"><use href="#ext"/></svg></li>
    <li><svg class="i16"><use href="#sk"/></svg></li><li><svg class="i16"><use href="#sk"/></svg></li><li><svg class="i16"><use href="#sk"/></svg></li><li><svg class="i16"><use href="#sk"/></svg></li><li><svg class="i16"><use href="#sk"/></svg></li>
    <li><svg class="i16"><use href="#sk"/></svg></li><li><svg class="i16"><use href="#sk"/></svg></li><li><svg class="i16"><use href="#sk"/></svg></li><li><svg class="i16"><use href="#sk"/></svg></li><li><svg class="i16"><use href="#sk"/></svg></li>
    <li><svg class="i16"><use href="#sk"/></svg></li><li><svg class="i16"><use href="#sk"/></svg></li><li><svg class="i16"><use href="#sk"/></svg></li><li><svg class="i16"><use href="#sk"/></svg></li><li><svg class="i16"><use href="#sk"/></svg></li>
    <li><svg class="i16"><use href="#align"/></svg></li><li><svg class="i16"><use href="#sk"/></svg></li>
  </ol>
  <svg class="marker" viewBox="0 0 12 32"><path d="M0 0H12V5L7 10V32H5V10L0 5Z" fill="#5a5a5a"/></svg>
  <button class="settings" aria-label="Timeline settings"><svg class="i16"><use href="#gear"/></svg></button>
</footer>
<script src="grid.js"></script>
</body>
</html>
```
FILE: styles.css
```css
* { box-sizing: border-box; }
body {
  margin: 0;
  height: 100vh;
  display: flex;
  flex-direction: column;
  overflow: hidden;
  font: 11px/14px "Liberation Sans", Arial, sans-serif;
  color: #3c3c3c;
  background: #f1f1f1;
}
button {
  border: 0;
  padding: 0;
  background: none;
  font: inherit;
  color: inherit;
  display: flex;
  align-items: center;
  justify-content: center;
  white-space: nowrap;
}
h1, h2, ul, ol { margin: 0; padding: 0; font-weight: normal; list-style: none; }
h2 { font-size: 10px; color: #555; }
svg { display: block; flex: none; }
.sprite { position: absolute; width: 0; height: 0; }
.i8 { width: 8px; height: 8px; }
.i10 { width: 10px; height: 10px; }
.i14 { width: 14px; height: 14px; }
.i16 { width: 16px; height: 16px; }
.i32 { width: 32px; height: 32px; }
.i38 { width: 38px; height: 38px; }
.g, .b, .r { fill: none; stroke-width: 1.2; }
.g { stroke: #666; }
.b { stroke: #2f86c2; }
.r { stroke: #bb3f3b; }
.bf { fill: #2f86c2; }
.rf { fill: #b33430; }
.caret { border: 3px solid transparent; border-top: 5px solid #3c3c3c; border-bottom: 0; }
.caret.big { border-width: 7px 5px 0; }
.caret.pale { border-top-color: #909090; }

.titlebar { display: flex; align-items: center; height: 23px; padding: 0 20px 0 3px; background: #fff; }
.apptitle { margin-left: 6px; font: 11px/16px "Open Sans", sans-serif; color: #8a8a8a; }
.winbtns { display: flex; gap: 36px; margin-left: auto; margin-bottom: 3px; }

.appbar { display: flex; align-items: flex-end; height: 32px; background: #cbcbcb; }
.quick { display: flex; align-items: center; align-self: stretch; width: 197px; padding-left: 9px; color: #5e5e5e; }
.pair { gap: 5px; }
.file { margin-left: 18px; }
.save { margin-left: 19px; }
.undo { margin-left: 20px; gap: 8px; }
.redo { margin-left: 14px; gap: 7px; }
.doctab {
  flex: 1;
  display: grid;
  grid-template-columns: 1fr auto 1fr;
  align-items: center;
  height: 28px;
  padding-right: 7px;
  border-radius: 3px 3px 0 0;
  background: #f1f1f1;
}
.docname { display: flex; align-items: center; gap: 5px; font-size: 12px; padding-right: 8px; }
.closetab { justify-self: end; }
.newtab { width: 28px; height: 28px; margin-left: 4px; border-radius: 3px 3px 0 0; background: #b9b9b9; }
.subscribe { align-self: center; width: 101px; height: 24px; margin: 0 12px 0 8px; border-radius: 3px; background: #faa21e; color: #fff; padding-right: 6px; }
.account { display: flex; align-items: center; align-self: center; gap: 17px; padding-right: 11px; }
.avatar { width: 25px; height: 25px; border-radius: 13px; background: #eee; font: 11px/14px "Open Sans", sans-serif; margin-left: 1px; }

.ribbon { display: flex; height: 81px; padding-left: 11px; border-bottom: 1px solid #d4d4d4; }
.design { gap: 6px; width: 111px; height: 62px; margin: 10px 15px 0 0; border: 2px solid #dedede; border-radius: 4px; font-size: 10px; font-weight: bold; }
.ribbonmain { flex: 1; }
.tabs { display: flex; gap: 21px; height: 25px; font-size: 10px; }
.tabs button { padding: 0 13px 2px; }
.tabs .active { padding-bottom: 0; border-bottom: 3px solid #1f8fc4; background: #cbe9f5; color: #1c86bb; font-weight: bold; }
.panels { display: flex; height: 55px; font-size: 10px; }
.panel { display: flex; flex-direction: column; align-items: center; flex: none; padding: 2px 10px 0; border-right: 2px solid #dedede; margin-bottom: 2px; }
.panel:first-child { padding-left: 0; }
.tools { display: flex; gap: 11px; height: 32px; align-items: center; }
.plabel { gap: 3px; height: 14px; margin-top: 6px; }
.panel.mid { width: 78px; }
.panel.narrow { width: 68px; }
.panel.last { width: 78px; border: 0; }
.panel.finish { width: 103px; margin: -3px 0 0; padding-top: 5px; border: 0; background: #cde9f4; }

.viewport { position: relative; flex: 1; min-height: 0; display: flex; justify-content: space-between; padding: 5px 4px 4px; background: #fff; overflow: hidden; }
.scene { position: absolute; inset: 0; width: 100%; height: 100%; }
.minor { fill: none; stroke: #e9e9e9; mix-blend-mode: multiply; }
.major { fill: none; stroke: #d9d9d9; mix-blend-mode: multiply; }
.axis { font-size: 14px; fill: #666; }

.left { position: relative; display: flex; flex-direction: column; justify-content: space-between; width: 300px; }
.bar { display: flex; align-items: center; height: 25px; padding: 0 2px 0 4px; border: 1px solid #c4c4c4; background: #f1f1f1; }
.bar h2 { flex: 1; margin-left: 10px; }
.comments h2 { margin-left: 20px; }
.grip { width: 3px; height: 11px; margin-left: 6px; border: solid #777; border-width: 0 1px; }
.tree { display: flex; flex-direction: column; gap: 4px; margin-top: 5px; }
.tree li { display: flex; align-items: center; height: 20px; }
.tw { width: 12px; height: 12px; margin-right: 8px; }
.tc { width: 10px; height: 14px; margin: 0 8px 0 2px; }
.l0 { padding-left: 16px; }
.l1 { padding-left: 34px; }
.l2 { padding-left: 72px; }
.row { display: flex; align-items: center; gap: 13px; height: 20px; padding: 0 11px 0 3px; background: #f1f1f1; }
.row .eye { margin-right: -5px; }
.l2 .row { gap: 14px; }
.l0 .row { gap: 6px; padding-right: 7px; }
.root { display: flex; align-items: center; gap: 14px; height: 16px; padding: 0 10px 0 3px; background: #999; color: #fff; font-weight: bold; }
.row input { appearance: none; width: 13px; height: 13px; margin: 0; border: 1px solid #222; border-radius: 7px; background: radial-gradient(circle, #222 0 3px, #fff 3px); }
.grey { color: #999; }

.navbar { position: relative; align-self: flex-end; display: flex; align-items: center; width: 253px; height: 24px; padding-left: 3px; background: #f1f1f1; }
.navbar button { margin-right: 6px; }
.navbar .pan { margin-left: 4px; }
.navbar .wide { margin-left: 7px; }
.navbar .wide, .navbar .tight { gap: 2px; }

.right { position: relative; display: flex; flex-direction: column; align-items: flex-end; width: 300px; }
.viewcube { width: 110px; height: 120px; }
.face { font-size: 26px; font-weight: bold; fill: #8b8e92; }
.small { font-size: 18px; }
.zlab, .xlab { font-size: 38px; font-weight: bold; }
.zlab { fill: #8583e0; }
.xlab { fill: #ee8f8b; }
.palette { width: 250px; border: 1px solid #c4c4c4; background: #f1f1f1; }
.phead { display: flex; align-items: center; gap: 4px; height: 24px; padding: 0 4px 0 0; border-bottom: 1px solid #c4c4c4; }
.phead .grip { margin: 0 3px 0 1px; }
.phead .more { margin-left: auto; }
.options { padding: 0 0 1px 12px; }
.optitle { gap: 4px; height: 30px; margin-left: -8px; font-weight: bold; }
.opt { display: grid; grid-template-columns: 1fr 16px; align-items: center; justify-items: center; height: 30px; padding-right: 68px; }
.opt span { justify-self: start; }
.opt input { appearance: none; width: 14px; height: 14px; margin: 0; border: 1px solid #555; border-radius: 3px; background: linear-gradient(#ddd, #bbb); display: grid; place-items: center; }
.opt input:not(:checked) { background: linear-gradient(#fff, #bbb); }
.opt input:checked::before { content: ""; width: 5px; height: 9px; margin-bottom: 2px; border: solid #111; border-width: 0 2px 2px 0; transform: rotate(40deg); }
.pfoot { display: flex; justify-content: flex-end; align-items: center; height: 37px; padding: 0 11px 0 0; border-top: 1px solid #c4c4c4; }
.pfoot button { width: 82px; height: 20px; border: 1px solid #aaa; background: #e6e6e6; color: #666; font-size: 12px; }

.timeline { display: flex; align-items: center; height: 50px; border-top: 2px solid #c4c4c4; padding: 0 13px 0 9px; }
.play { display: flex; gap: 9px; width: 133px; }
.features { display: flex; align-self: flex-end; height: 36px; margin-bottom: 5px; }
.features li { position: relative; width: 24px; display: flex; justify-content: center; padding-top: 8px; border-bottom: 2px solid #c9c9c9; }
.features li::after { content: ""; position: absolute; left: 11px; bottom: 0; width: 2px; height: 5px; background: #c9c9c9; }
.features li:first-child, .features li:last-child { border-image: linear-gradient(90deg, transparent 11px, #c9c9c9 11px) 1; border-style: solid; border-width: 0 0 2px; }
.features li:last-child { border-image-source: linear-gradient(90deg, #c9c9c9 13px, transparent 13px); }
.marker { width: 12px; height: 32px; margin-left: -6px; }
.settings { margin-left: auto; color: #666; }
```
FILE: grid.js
```js
// Sketch grid: vertical lines plus lines that follow the slope of the X axis.
const X0 = 1327.3, STEP_X = 9.15;
const Y0 = 242.3, STEP_Y = 10.914, SLOPE = 0.0962;
const paths = { major: "", minor: "" };
const add = (k, d) => { paths[k % 5 === 0 ? "major" : "minor"] += d; };

for (let k = -146; k <= 135; k++) {
  add(k, `M${(X0 + k * STEP_X).toFixed(2)} 136V1390`);
}
for (let k = -34; k <= 106; k++) {
  const y = Y0 + k * STEP_Y;
  add(k, `M0 ${y.toFixed(2)}L2560 ${(y + 2560 * SLOPE).toFixed(2)}`);
}
document.getElementById("grid-minor").setAttribute("d", paths.minor);
document.getElementById("grid-major").setAttribute("d", paths.major);
```
